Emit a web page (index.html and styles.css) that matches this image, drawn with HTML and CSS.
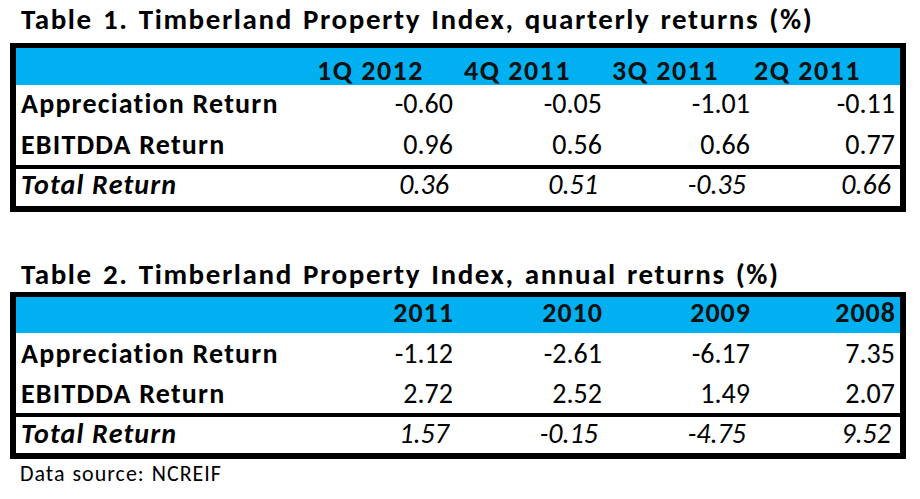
FILE: index.html
```html
<!DOCTYPE html>
<html>
<head>
<meta charset="utf-8">
<link rel="stylesheet" href="styles.css">
</head>
<body>
<div class="page">
  <h2 class="title title-1">Table 1. Timberland Property Index, quarterly returns (%)</h2>
  <div class="tbl tbl-1">
    <div class="row head">
      <div class="cell label"></div>
      <div class="cell num q1">1Q 2012</div>
      <div class="cell num q2">4Q 2011</div>
      <div class="cell num q3">3Q 2011</div>
      <div class="cell num q4">2Q 2011</div>
    </div>
    <div class="row body r1">
      <div class="cell label">Appreciation Return</div>
      <div class="cell num">-0.60</div>
      <div class="cell num">-0.05</div>
      <div class="cell num">-1.01</div>
      <div class="cell num">-0.11</div>
    </div>
    <div class="row body r2">
      <div class="cell label">EBITDDA Return</div>
      <div class="cell num">0.96</div>
      <div class="cell num">0.56</div>
      <div class="cell num">0.66</div>
      <div class="cell num">0.77</div>
    </div>
    <div class="row total">
      <div class="cell label">Total Return</div>
      <div class="cell num">0.36</div>
      <div class="cell num">0.51</div>
      <div class="cell num">-0.35</div>
      <div class="cell num">0.66</div>
    </div>
  </div>

  <h2 class="title title-2">Table 2. Timberland Property Index, annual returns (%)</h2>
  <div class="tbl tbl-2">
    <div class="row head">
      <div class="cell label"></div>
      <div class="cell num">2011</div>
      <div class="cell num">2010</div>
      <div class="cell num">2009</div>
      <div class="cell num">2008</div>
    </div>
    <div class="row body r1">
      <div class="cell label">Appreciation Return</div>
      <div class="cell num">-1.12</div>
      <div class="cell num">-2.61</div>
      <div class="cell num">-6.17</div>
      <div class="cell num">7.35</div>
    </div>
    <div class="row body r2">
      <div class="cell label">EBITDDA Return</div>
      <div class="cell num">2.72</div>
      <div class="cell num">2.52</div>
      <div class="cell num">1.49</div>
      <div class="cell num">2.07</div>
    </div>
    <div class="row total">
      <div class="cell label">Total Return</div>
      <div class="cell num">1.57</div>
      <div class="cell num">-0.15</div>
      <div class="cell num">-4.75</div>
      <div class="cell num">9.52</div>
    </div>
  </div>

  <p class="source">Data source: NCREIF</p>
</div>
</body>
</html>
```

FILE: styles.css
```css
html, body {
  margin: 0;
  padding: 0;
  background: #ffffff;
}

body {
  font-family: "Carlito", "Calibri", "Lato", sans-serif;
  color: #000000;
}

.page {
  width: 920px;
  height: 499px;
  overflow: hidden;
}

.title {
  margin: 0;
  padding-left: 21px;
  font-size: 29px;
  line-height: 28px;
  font-weight: 700;
  letter-spacing: 1.6px;
  word-spacing: 2px;
  white-space: nowrap;
}

.title-1 {
  padding-top: 5px;
  height: 43px;
  box-sizing: border-box;
}

.title-2 {
  padding-top: 48px;
  height: 80px;
  box-sizing: border-box;
}

.tbl {
  margin-left: 10px;
  width: 896px;
  box-sizing: border-box;
  border: 6px solid #000000;
  border-top-width: 5px;
  padding-right: 5px;
  display: flex;
  flex-direction: column;
}

.row {
  display: grid;
  grid-template-columns: 288px 149px 149px 148px 145px;
  align-items: end;
  box-sizing: border-box;
  font-size: 28px;
  line-height: 28px;
}

.head {
  background: #00b0f0;
  margin-right: -5px;
  padding-right: 5px;
  font-weight: 700;
  color: #111111;
}

.head .num {
  letter-spacing: 1px;
  margin-right: -1px;
}

.cell {
  white-space: nowrap;
}

.label {
  padding-left: 5px;
  font-weight: 700;
  letter-spacing: 1.2px;
}

.num {
  text-align: right;
}

.tbl-1 .head { height: 37px; padding-bottom: 0; }
.tbl-1 .head .num { letter-spacing: 1.5px; word-spacing: 0; }
.tbl-1 .q1 { padding-right: 30px; }
.tbl-1 .q2 { padding-right: 32px; }
.tbl-1 .q3 { padding-right: 32px; }
.tbl-1 .q4 { padding-right: 35px; }
.tbl-1 .r1 { height: 40px; padding-bottom: 7px; }
.tbl-1 .r2 { height: 40px; padding-bottom: 6px; }
.tbl-1 .total { height: 41px; padding-bottom: 7px; }

.tbl-2 .head { height: 36px; padding-bottom: 6px; }
.tbl-2 .r1 { height: 40px; padding-bottom: 5px; }
.tbl-2 .r2 { height: 40px; padding-bottom: 5px; }
.tbl-2 .total { height: 40px; padding-bottom: 5px; }

.total {
  border-top: 4px solid #000000;
  margin-right: -5px;
  padding-right: 5px;
  font-style: italic;
}

.total .num {
  font-weight: 400;
  padding-right: 4px;
}

.source {
  margin: 4px 0 0 0;
  padding-left: 20px;
  font-size: 22px;
  line-height: 22px;
  letter-spacing: 1px;
  word-spacing: 1px;
}
```
